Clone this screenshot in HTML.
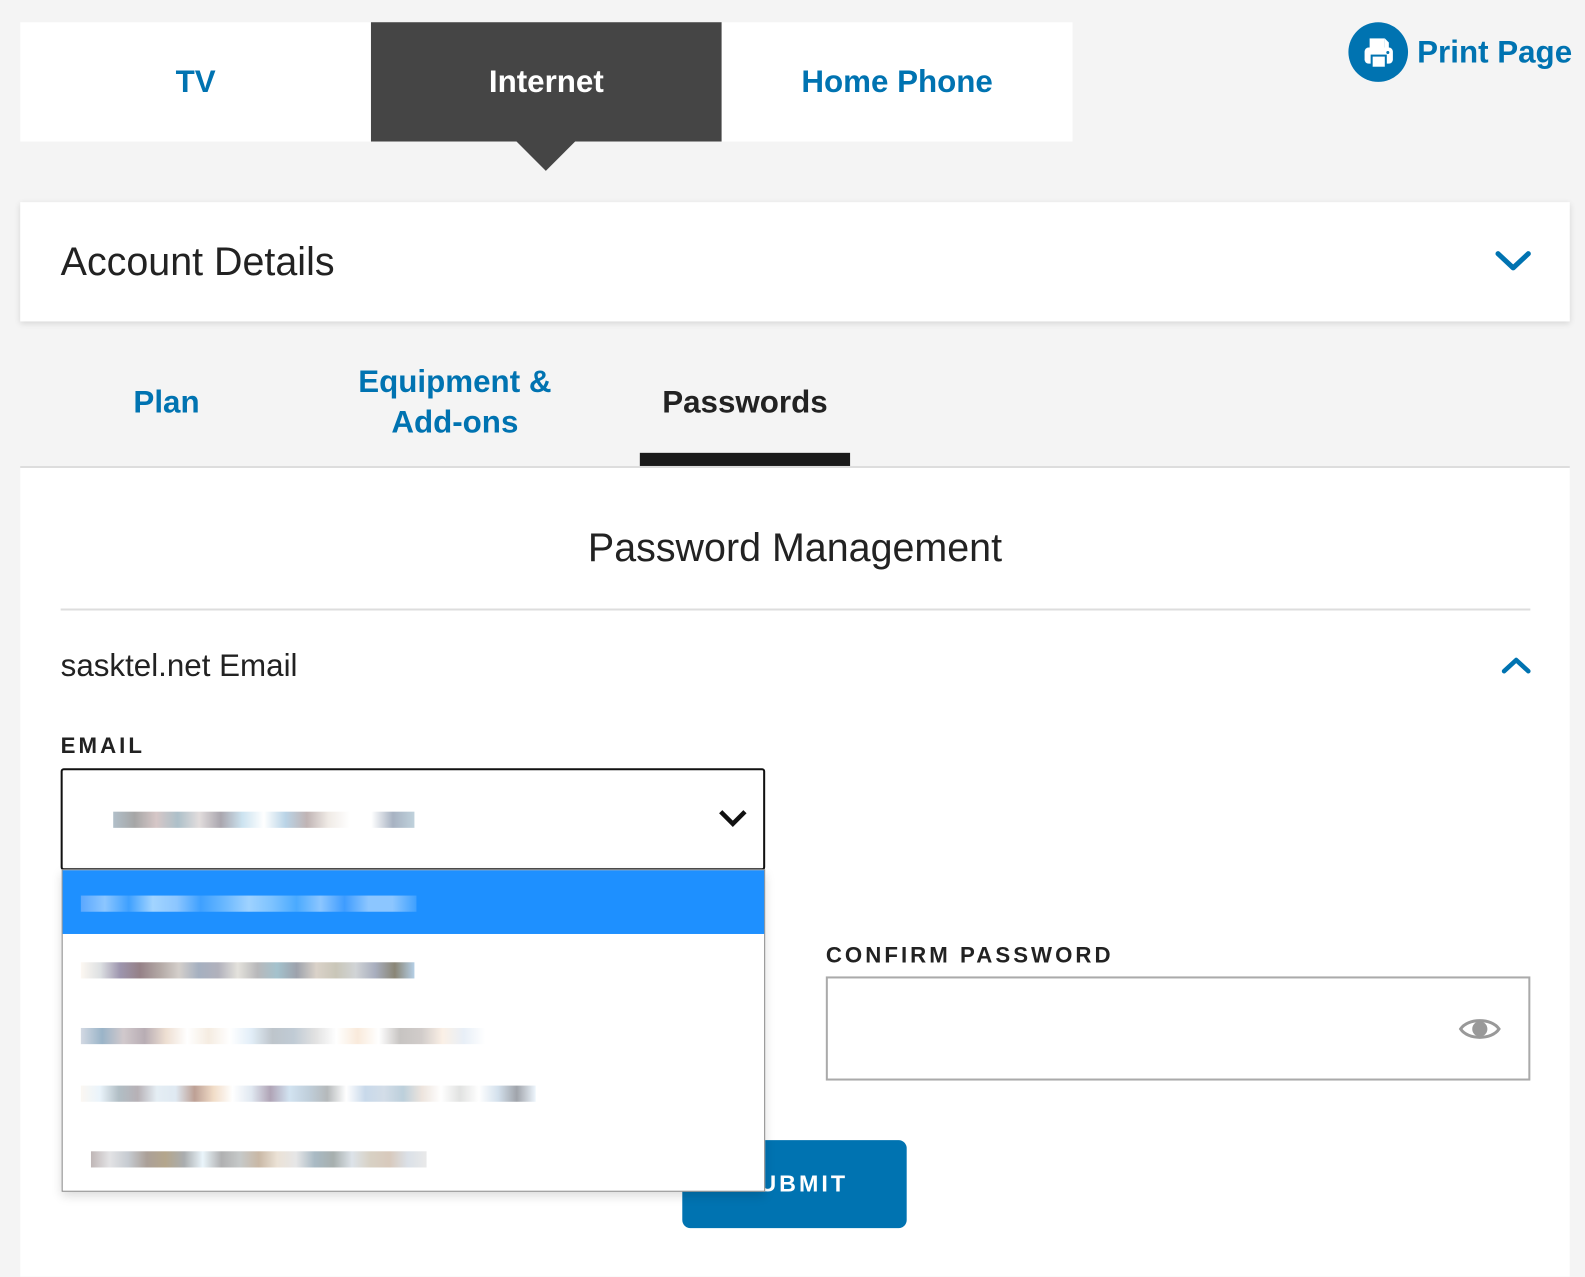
<!DOCTYPE html>
<html><head><meta charset="utf-8"><style>
*{box-sizing:border-box;margin:0;padding:0}
body{width:1585px;height:1255px;background:#f4f4f4;font-family:"Liberation Sans",sans-serif;position:relative;overflow:hidden;color:#222}
#w{position:absolute;left:0;top:0;width:1568px;height:1242px;transform:scale(1.0108);transform-origin:0 0}
.abs{position:absolute}
.tab{position:absolute;top:22px;height:118px;background:#fff;color:#0073b1;font-size:31px;font-weight:bold;display:flex;align-items:center;justify-content:center}
.px{position:absolute;height:16px}
</style></head><body><div id="w">
<div class="tab" style="left:20px;width:347px">TV</div>
<div class="tab" style="left:367px;width:347px;background:#454545;color:#fff">Internet</div>
<div class="tab" style="left:714px;width:347px">Home Phone</div>
<div class="abs" style="left:510px;top:139px;width:0;height:0;border-left:30px solid transparent;border-right:30px solid transparent;border-top:30px solid #454545"></div>

<div class="abs" style="left:1334px;top:22px;width:59px;height:59px;border-radius:50%;background:#0073b1"></div>
<svg class="abs" style="left:1344px;top:32px" width="40" height="40" viewBox="0 0 40 40"><rect x="11" y="6" width="15" height="10" fill="#fff"/><path d="M26 6l4 4v6h-4z" fill="#fff"/><rect x="6" y="15" width="28" height="16" rx="4" fill="#fff"/><rect x="12" y="22" width="16" height="12" fill="#0073b1"/><rect x="14" y="24" width="12" height="10" fill="#fff"/><circle cx="29" cy="20" r="1.5" fill="#0073b1"/></svg>
<div class="abs" style="left:1402px;top:34px;font-size:31px;font-weight:bold;color:#0073b1">Print Page</div>

<div class="abs" style="left:20px;top:200px;width:1533px;height:118px;background:#fff;box-shadow:0 2px 6px rgba(0,0,0,.12)"></div>
<div class="abs" style="left:60px;top:238px;font-size:39px;color:#222">Account Details</div>
<svg class="abs" style="left:1478px;top:245px" width="38" height="26"><path d="M4 6l15 14 15-14" fill="none" stroke="#0073b1" stroke-width="5" stroke-linecap="round" stroke-linejoin="round"/></svg>

<div class="abs" style="left:132px;top:380px;font-size:31px;font-weight:bold;color:#0073b1">Plan</div>
<div class="abs" style="left:340px;top:358px;width:220px;text-align:center;font-size:31px;font-weight:bold;color:#0073b1;line-height:40px">Equipment &amp;<br>Add-ons</div>
<div class="abs" style="left:633px;top:380px;width:208px;text-align:center;font-size:31px;font-weight:bold;color:#222">Passwords</div>
<div class="abs" style="left:633px;top:448px;width:208px;height:13px;background:#1a1a1a"></div>
<div class="abs" style="left:20px;top:461px;width:1533px;height:2px;background:#ddd"></div>

<div class="abs" style="left:20px;top:463px;width:1533px;height:800px;background:#fff"></div>
<div class="abs" style="left:20px;top:521px;width:1533px;text-align:center;font-size:39px;color:#222">Password Management</div>
<div class="abs" style="left:60px;top:602px;width:1454px;height:2px;background:#ddd"></div>
<div class="abs" style="left:60px;top:641px;font-size:31px;color:#222">sasktel.net Email</div>
<svg class="abs" style="left:1484px;top:646px" width="32" height="24"><path d="M4 18l12-11 12 11" fill="none" stroke="#0073b1" stroke-width="4.5" stroke-linecap="round" stroke-linejoin="round"/></svg>
<div class="abs" style="left:60px;top:725px;font-size:22px;font-weight:bold;letter-spacing:3px;color:#222">EMAIL</div>

<div class="abs" style="left:817px;top:932px;font-size:22px;font-weight:bold;letter-spacing:3px;color:#222">CONFIRM PASSWORD</div>
<div class="abs" style="left:817px;top:966px;width:697px;height:103px;border:2px solid #aaa;background:#fff"></div>
<svg class="abs" style="left:1442px;top:1002px" width="44" height="32"><path d="M3 16C10 5 34 5 41 16C34 27 10 27 3 16z" fill="none" stroke="#999" stroke-width="3"/><circle cx="22" cy="16" r="7.5" fill="#999"/></svg>

<div class="abs" style="left:675px;top:1128px;width:222px;height:87px;background:#0073b1;border-radius:8px;color:#fff;font-size:23px;font-weight:bold;letter-spacing:3px;text-align:center;line-height:87px">SUBMIT</div>

<div class="abs" style="left:60px;top:760px;width:697px;height:101px;border:2px solid #111;border-radius:3px;background:#fff"></div>
<div class="px" style="left:112px;top:803px;width:298px;background:linear-gradient(90deg,#b1bfc9,#a6a6a6,#d6c7c7,#adc0c9,#e2dddd,#aaa6ae,#cce3f0,#fff,#bad4e7,#c0b4b4,#f0ebe6,#fff,#fff,#a7b2c2,#c0d2dc)"></div>
<svg class="abs" style="left:708px;top:797px" width="34" height="26"><path d="M5 6l12 12 12-12" fill="none" stroke="#111" stroke-width="4.5"/></svg>

<div class="abs" style="left:61px;top:860px;width:696px;height:319px;background:#fff;border:1px solid #888;box-shadow:0 4px 10px rgba(0,0,0,.15)"></div>
<div class="abs" style="left:62px;top:861px;width:694px;height:63px;background:#1e90ff"></div>
<div class="px" style="left:80px;top:886px;width:332px;background:linear-gradient(90deg,#5aa8ff,#8cc6ff,#3ea0ff,#a2d4ff,#8cc6ff,#3ea0ff,#6ab8ff,#9fd2ff,#7cc2ff,#4aaaff,#8cc6ff,#3e9cff,#8cc6ff,#8cc6ff,#3ea0ff)"></div>
<div class="px" style="left:80px;top:952px;width:330px;background:linear-gradient(90deg,#fdf8f2,#dde0e2,#9d95ae,#958187,#b2a7a4,#d4cfcb,#a5b0c0,#b1b1bc,#e4e2dc,#b8b8ba,#a4c2cd,#9da2ac,#dad2c9,#c9c6b8,#d1d4d6,#a8aebe,#8a8676,#b5cfe6)"></div>
<div class="px" style="left:80px;top:1017px;width:400px;background:linear-gradient(90deg,#d3d9e3,#9ab4c8,#d1c9cc,#b8adb4,#eedfd2,#fff,#f5ece1,#fff,#e2eef8,#bec5cb,#c0cbd5,#e1e1e1,#fff,#f9eadb,#fff,#c7c4c2,#d1ccca,#fbf0e6,#e8eff7,#fff)"></div>
<div class="px" style="left:80px;top:1074px;width:450px;background:linear-gradient(90deg,#fbf7f2,#eaf4fb,#b1bec5,#b7b1b6,#e5eef4,#dfe9f2,#bda095,#f1dcc7,#fff,#e0e8f1,#b0a4b6,#d2e3f1,#c0cfdb,#b5b9bb,#fff,#c8d9ea,#d3dde8,#bccfdb,#ede4dd,#fff,#e1e2e1,#fff,#d4e1ed,#a0a4ab,#eef6fd)"></div>
<div class="px" style="left:90px;top:1139px;width:332px;background:linear-gradient(90deg,#bfb6b6,#e3e3e5,#c6cbd1,#aba098,#b4a68c,#aaadaf,#eaf5fb,#b0b0b1,#c6c9c9,#c9b8a5,#ebe2d6,#e6e6e7,#a9bac4,#a7afae,#dde3e9,#d8d1c4,#d8c9bc,#dbe1e8,#e9e9e9)"></div>
</div></body></html>
